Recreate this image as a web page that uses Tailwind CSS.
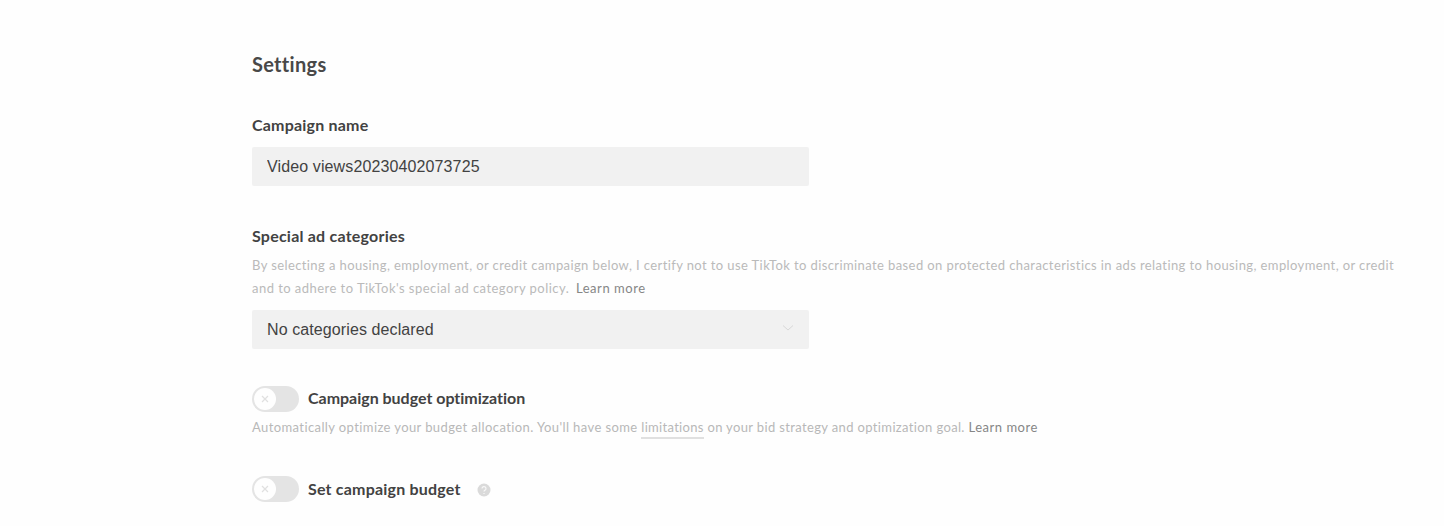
<!DOCTYPE html>
<html lang="en">
<head>
  <meta charset="UTF-8" />
  <meta name="viewport" content="width=device-width, initial-scale=1.0" />
  <title>Campaign settings</title>
  <script src="https://cdn.jsdelivr.net/npm/@tailwindcss/browser@4"></script>
</head>
<body class="bg-[#fefefe] text-[#424242] h-[526px] overflow-hidden font-[Lato,sans-serif]">
  <main class="pl-[252px] pt-[49px]">
    <h1 class="h-[30px] leading-[30px] text-[20px] font-bold tracking-[0.3px] text-[#484848]">Settings</h1>

    <section class="mt-[34px]">
      <label for="name" class="block h-6 leading-6 text-[16px] font-bold tracking-[0.2px]">Campaign name</label>
      <input id="name" type="text" value="Video views20230402073725"
             class="block mt-[10px] w-[557px] h-[39px] px-[15px] bg-[#f1f1f1] rounded-xs text-[16px] tracking-[0.12px] font-['Liberation_Sans',sans-serif]" />
    </section>

    <section class="mt-[38px]">
      <h2 class="h-6 leading-6 text-[16px] font-bold tracking-[0.22px]">Special ad categories</h2>
      <p class="mt-[6px] leading-[23px] text-[13px] text-[#bababa] tracking-[0.4px] whitespace-nowrap">
        By selecting a housing, employment, or credit campaign below, I certify not to use TikTok to discriminate based on protected characteristics in ads relating to housing, employment, or credit<br />
        <span class="tracking-[0.46px]">and to adhere to TikTok's special ad category policy.</span>
        <a href="#" class="ml-[3px] text-[#868686] tracking-[0.55px]">Learn more</a>
      </p>
      <button type="button" class="mt-[10px] flex items-center justify-between w-[557px] h-[39px] px-[15px] bg-[#f1f1f1] rounded-xs text-[16px]">
        <span class="font-['Liberation_Sans',sans-serif] tracking-[0.1px]">No categories declared</span>
        <svg class="w-3 h-2 -mt-1" viewBox="0 0 12 8" fill="none" stroke="#d8d8d8"><path d="M1 1.5 6 6l5-4.5" /></svg>
      </button>
    </section>

    <section class="mt-[37px]">
      <div class="flex items-center h-[26px]">
        <div class="flex items-center w-[47px] h-[26px] p-0.5 rounded-full bg-[#e4e4e4]">
          <span class="flex items-center justify-center size-[22px] rounded-full bg-[#fefefe]">
            <svg class="size-2" viewBox="0 0 8 8" stroke="#e0e0e0" stroke-width="1.2"><path d="M1 1l6 6M7 1 1 7" /></svg>
          </span>
        </div>
        <span class="ml-[9px] -mt-0.5 text-[16px] font-bold tracking-[-0.02px]">Campaign budget optimization</span>
      </div>
      <p class="mt-1 h-[23px] leading-[23px] text-[13px] text-[#b8b8b8] tracking-[0.4px] whitespace-nowrap">
        Automatically optimize your budget allocation. You'll have some
        <span class="inline-block h-[23px] border-b-2 border-[#e0e0e0] tracking-[0.3px]">limitations</span>
        <span class="tracking-[0.36px]">on your bid strategy and optimization goal.</span>
        <a href="#" class="text-[#868686] tracking-[0.5px]">Learn more</a>
      </p>
    </section>

    <section class="mt-[37px] flex items-center h-[26px]">
      <div class="flex items-center w-[47px] h-[26px] p-0.5 rounded-full bg-[#e4e4e4]">
        <span class="flex items-center justify-center size-[22px] rounded-full bg-[#fefefe]">
          <svg class="size-2" viewBox="0 0 8 8" stroke="#e0e0e0" stroke-width="1.2"><path d="M1 1l6 6M7 1 1 7" /></svg>
        </span>
      </div>
      <span class="ml-[9px] text-[16px] font-bold tracking-[0.2px]">Set campaign budget</span>
      <svg class="ml-[16px] mt-0.5 size-[14px]" viewBox="0 0 14 14" fill="none">
        <circle cx="7" cy="7" r="6.5" fill="#dadada" />
        <path d="M5 5.6a2 2 0 1 1 2.8 1.8c-.6.3-.8.6-.8 1.2M7 10v1" stroke="#f8f8f8" stroke-width="1.2" />
      </svg>
    </section>
  </main>
</body>
</html>
